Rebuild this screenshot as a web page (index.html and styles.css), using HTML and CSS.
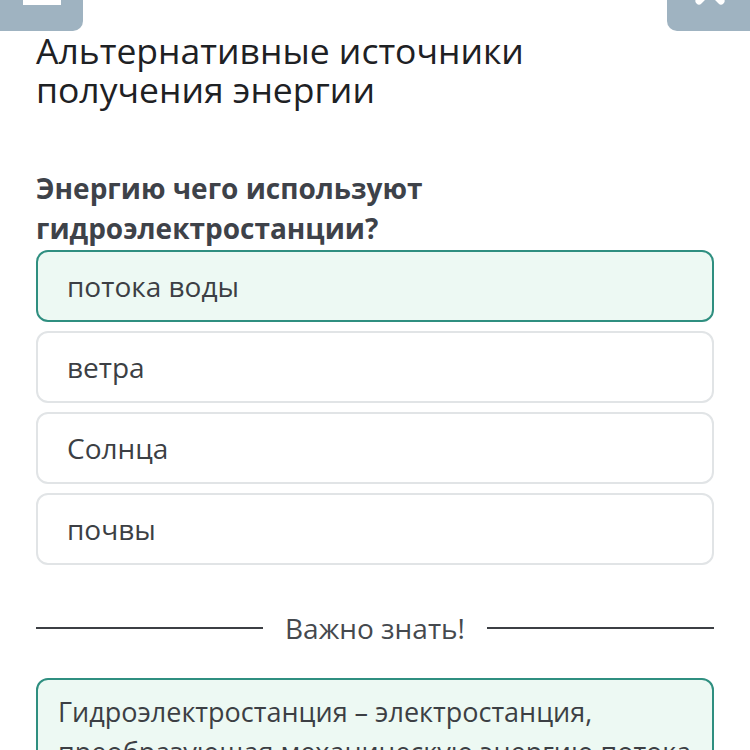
FILE: index.html
```html
<!DOCTYPE html>
<html lang="ru">
  <head>
    <meta charset="UTF-8" />
    <title>Альтернативные источники получения энергии</title>
    <link rel="stylesheet" href="styles.css">
  </head>
  <body>
    <div class="topbar">
      <div class="top-btn top-btn-left"><span class="menu-bar"></span></div>
      <div class="top-btn top-btn-right">
        <svg class="close-icon" width="34" height="34" viewBox="0 0 34 34">
          <path d="M6 6 L28 28 M28 6 L6 28" stroke="#ffffff" stroke-width="7" stroke-linecap="round" fill="none" />
        </svg>
      </div>
    </div>

    <div class="content">
      <h1 class="lesson-title">Альтернативные источники<br>получения энергии</h1>

      <h2 class="question">Энергию чего используют<br>гидроэлектростанции?</h2>

      <div class="answers">
        <div class="answer answer-selected">потока воды</div>
        <div class="answer">ветра</div>
        <div class="answer">Солнца</div>
        <div class="answer">почвы</div>
      </div>

      <div class="divider">
        <span class="divider-line"></span>
        <span class="divider-text">Важно знать!</span>
        <span class="divider-line"></span>
      </div>

      <div class="info-box">
        Гидроэлектростанция – электростанция, преобразующая механическую энергию потока воды в электрическую энергию.
      </div>
    </div>
  </body>
</html>
```

FILE: styles.css
```css
body {
  font-family: "Open Sans", Arial, sans-serif;
  background: #ffffff;
  margin: 0;
  color: #2b2f33;
  height: 750px;
  overflow: hidden;
}
.topbar {
  display: flex;
  justify-content: space-between;
  height: 31px;
}
.top-btn {
  width: 83px;
  height: 31px;
  background: #9fb3c1;
  display: flex;
  justify-content: center;
  overflow: hidden;
}
.top-btn-left {
  border-radius: 0 0 10px 0;
}
.top-btn-right {
  border-radius: 0 0 0 10px;
}
.menu-bar {
  display: block;
  width: 38px;
  height: 5px;
  background: #ffffff;
  margin-left: 1px;
}
.close-icon {
  margin-top: -27px;
  margin-left: 2px;
}
.content {
  padding: 0 36px;
}
.lesson-title {
  font-size: 35.5px;
  font-weight: 400;
  line-height: 39px;
  margin: 0;
  color: #1e2124;
}
.question {
  font-size: 28px;
  font-weight: 700;
  line-height: 40px;
  color: #3e4249;
  margin: 59px 0 0;
}
.answers {
  display: flex;
  flex-direction: column;
  gap: 9px;
  margin-top: 2px;
}
.answer {
  height: 68px;
  border: 2px solid #e1e4e6;
  border-radius: 12px;
  padding: 0 29px;
  display: flex;
  align-items: center;
  font-size: 28px;
  color: #3c3f44;
}
.answer-selected {
  background: #edf9f3;
  border-color: #2f8f80;
}
.divider {
  display: flex;
  align-items: center;
  gap: 22px;
  margin-top: 44px;
  line-height: 38px;
}
.divider-line {
  flex: 1;
  height: 2px;
  background: #3c3f44;
}
.divider-text {
  font-size: 28px;
  color: #45494e;
}
.info-box {
  margin-top: 31px;
  background: #edf9f3;
  border: 2px solid #2f8f80;
  border-radius: 12px;
  padding: 12px 20px;
  font-size: 27px;
  line-height: 40px;
  color: #3c3f44;
}
```
